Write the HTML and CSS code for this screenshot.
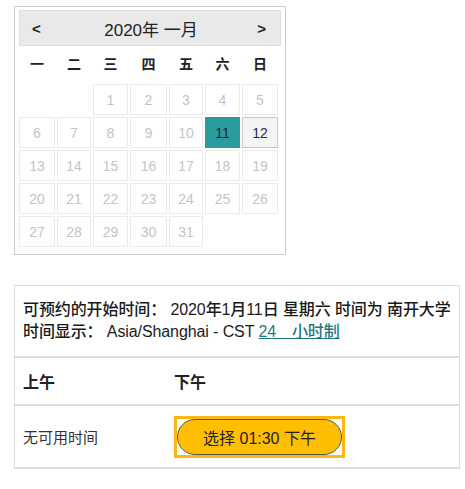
FILE: index.html
```html
<!DOCTYPE html>
<html lang="zh">
<head>
<meta charset="utf-8">
<title>预约</title>
<link rel="stylesheet" href="styles.css">
</head>
<body>
<div class="page">
  <div class="calendar">
    <div class="cal-head">
      <span class="nav">&lt;</span>
      <span class="title">2020年 一月</span>
      <span class="nav">&gt;</span>
    </div>
    <div class="grid">
      <div class="dow">一</div><div class="dow">二</div><div class="dow">三</div><div class="dow">四</div><div class="dow">五</div><div class="dow">六</div><div class="dow">日</div>
      <div class="blank"></div><div class="blank"></div>
      <div class="day">1</div><div class="day">2</div><div class="day">3</div><div class="day">4</div><div class="day">5</div>
      <div class="day">6</div><div class="day">7</div><div class="day">8</div><div class="day">9</div><div class="day">10</div><div class="day selected">11</div><div class="day today">12</div>
      <div class="day">13</div><div class="day">14</div><div class="day">15</div><div class="day">16</div><div class="day">17</div><div class="day">18</div><div class="day">19</div>
      <div class="day">20</div><div class="day">21</div><div class="day">22</div><div class="day">23</div><div class="day">24</div><div class="day">25</div><div class="day">26</div>
      <div class="day">27</div><div class="day">28</div><div class="day">29</div><div class="day">30</div><div class="day">31</div>
    </div>
  </div>

  <div class="slots">
    <div class="info">
      <div class="line">可预约的开始时间： 2020年1月11日 星期六 时间为 南开大学</div>
      <div class="line">时间显示： Asia/Shanghai - CST <a class="link" href="#">24　小时制</a></div>
    </div>
    <div class="row head-row">
      <div class="col-am">上午</div>
      <div class="col-pm">下午</div>
    </div>
    <div class="row body-row">
      <div class="col-am none">无可用时间</div>
      <div class="col-pm"><span class="focus-ring"><button class="pick">选择 01:30 下午</button></span></div>
    </div>
  </div>
</div>
</body>
</html>
```

FILE: styles.css
```css
html, body {
  margin: 0;
  padding: 0;
  background: #fff;
}
body {
  font-family: "Liberation Sans", "Noto Sans CJK SC", sans-serif;
  color: #222;
}
.page {
  padding: 6px 5px 0 14px;
}
.calendar {
  width: 262px;
  border: 1px solid #cccccc;
  padding: 3px 4px 7px 4px;
}
.cal-head {
  height: 34px;
  background: #e9e9e9;
  border: 1px solid #dedede;
  display: flex;
  align-items: center;
  justify-content: space-between;
  padding: 0 14px 0 12px;
}
.nav {
  font-weight: bold;
  font-size: 15px;
  color: #222;
}
.title {
  font-size: 17px;
  color: #222;
  padding-left: 4px;
}
.grid {
  display: grid;
  grid-template-columns: 36px 34px 35px 37px 34px 35px 36px;
  grid-template-rows: 36px;
  grid-auto-rows: 31px;
  column-gap: 2px;
  row-gap: 2px;
  width: 261px;
}
.dow {
  display: flex;
  align-items: center;
  justify-content: center;
  font-size: 14px;
  font-weight: bold;
  color: #222;
  margin-bottom: 2px;
}
.day {
  display: flex;
  align-items: center;
  justify-content: center;
  border: 1px solid #ebebeb;
  color: #c4c4c4;
  font-size: 14px;
}
.day.selected {
  background: #2b9c9e;
  border-color: #2b9c9e;
  color: #1a2a2a;
}
.day.today {
  background: #f4f4f4;
  border-color: #c8c8c8;
  color: #2a2a5a;
}
.slots {
  margin-top: 30px;
  width: 444px;
  border: 1px solid #dddddd;
  border-bottom-width: 2px;
}
.info {
  padding: 13px 8px 13px 8px;
  border-bottom: 2px solid #dddddd;
}
.line {
  font-size: 16px;
  line-height: 22px;
  font-weight: 500;
  color: #1a1a1a;
  white-space: nowrap;
  letter-spacing: -0.1px;
}
.link {
  color: #1f7a80;
  text-decoration: underline;
}
.row {
  display: flex;
  align-items: center;
}
.head-row {
  height: 46px;
  border-bottom: 2px solid #dddddd;
  font-weight: bold;
  font-size: 16px;
}
.body-row {
  height: 61px;
}
.col-am {
  width: 146px;
  padding-left: 8px;
}
.col-pm {
  padding-left: 5px;
}
.none {
  font-size: 15px;
  color: #333;
}
.focus-ring {
  display: inline-block;
  border: 3px solid #fbb710;
  background: #fff;
  line-height: 0;
}
.pick {
  width: 165px;
  height: 36px;
  border-radius: 18px;
  border: 1px solid #555;
  background: #ffbe00;
  color: #222;
  font-family: "Liberation Sans", "Noto Sans CJK SC", sans-serif;
  font-size: 16px;
  line-height: normal;
  padding: 0;
  display: block;
  outline: none;
}
```
